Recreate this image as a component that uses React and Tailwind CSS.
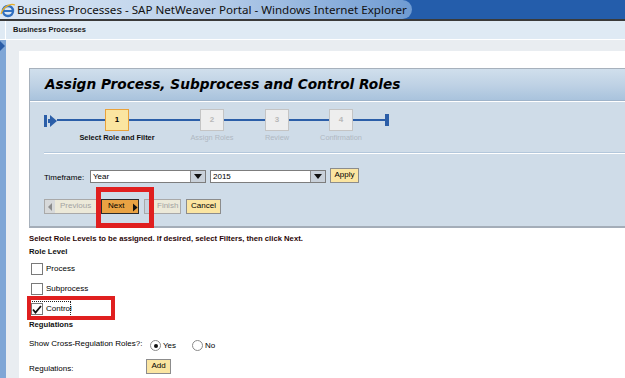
const sans = "font-['Liberation_Sans',Arial,sans-serif]";

function Step({ n, label, active }) {
  return (
    <div className="flex w-[24px] flex-col items-center">
      <div
        className={
          active
            ? "flex h-[22px] w-[24px] items-center justify-center border border-[#e9a23b] bg-[#fbe5a1] text-[8px] font-bold text-black"
            : "flex h-[22px] w-[24px] items-center justify-center border border-[#c4c4c4] bg-[#eeeeee] text-[8px] font-bold text-[#b8b8b8]"
        }
      >
        {n}
      </div>
      <div
        className={
          active
            ? "mt-[3px] whitespace-nowrap text-[7.4px] leading-[8px] font-bold text-[#111]"
            : "mt-[3px] whitespace-nowrap text-[7.4px] leading-[8px] text-[#b0b8c2]"
        }
      >
        {label}
      </div>
    </div>
  );
}

function Line({ w }) {
  return <div className="mt-[10px] h-[2px] bg-[#2b5ea8]" style={{ width: w }} />;
}

function Select({ value }) {
  return (
    <div className="flex h-[13px] w-[116px] border border-[#7d7d7d] bg-white">
      <div className="flex-1 pl-[2px] text-[8px] leading-[11px] text-black">{value}</div>
      <div className="flex w-[15px] items-center justify-center border-l border-[#8d8d8d] bg-[#c9d1da]">
        <svg width="8" height="5" viewBox="0 0 8 5">
          <path d="M0 0h8L4 5z" fill="#111" />
        </svg>
      </div>
    </div>
  );
}

function Checkbox({ checked }) {
  return (
    <div className="flex h-[12px] w-[12px] items-center justify-center border border-[#7a7a7a] bg-white">
      {checked && (
        <svg width="10" height="9" viewBox="0 0 10 9">
          <path d="M1 4.5l2.5 3L9 1" stroke="#111" strokeWidth="1.8" fill="none" />
        </svg>
      )}
    </div>
  );
}

function Radio({ checked }) {
  return (
    <div className="flex h-[11px] w-[11px] items-center justify-center rounded-full border border-[#8a8a8a] bg-white">
      {checked && <div className="h-[4px] w-[4px] rounded-full bg-[#111]" />}
    </div>
  );
}

export default function App() {
  return (
    <div className={`relative flex h-[378px] w-[625px] flex-col overflow-hidden bg-white ${sans}`}>
      {/* window title bar */}
      <div className="flex h-[19px] shrink-0 bg-[#245dab]">
        <div className="flex w-[412px] items-center rounded-r-[10px] bg-gradient-to-r from-[#dbe7f4] via-[#b9cfea] to-[#6f9bd2]">
          <svg width="16" height="16" viewBox="0 0 16 16" className="shrink-0">
            <circle cx="8" cy="9" r="5" stroke="#2f6fc0" strokeWidth="2.4" fill="none" />
            <path d="M3.5 9h9" stroke="#2f6fc0" strokeWidth="2" />
            <path d="M1 12C3 5 10 1 15 3" stroke="#e8b02a" strokeWidth="1.3" fill="none" />
          </svg>
          <span className="ml-[1px] whitespace-nowrap text-[11.6px] leading-[19px] text-[#111] font-['Noto_Sans',sans-serif]">
            Business Processes - SAP NetWeaver Portal - Windows Internet Explorer
          </span>
        </div>
      </div>
      <div className="h-[2px] shrink-0 bg-[#3a3a3a]" />

      {/* portal header */}
      <div className="flex h-[19px] shrink-0 items-center border-b border-white bg-[#dfeaf4]">
        <div className="ml-[5px] h-full w-[1px] bg-white" />
        <span className="ml-[7px] text-[7.5px] font-bold text-[#1a1a1a]">Business Processes</span>
      </div>

      <div className="flex flex-1">
        {/* left nav strip */}
        <div className="w-[6px] bg-[#7fa6d6]">
          <svg width="6" height="10" viewBox="0 0 6 10" className="mt-[1px]">
            <path d="M0 0l5 5-5 5z" fill="#2a5ca6" />
          </svg>
        </div>
        <div className="flex flex-1 flex-col bg-[#e9edf1]">
          <div className="h-[11px]" />
          <div className="flex flex-1">
            <div className="w-[13px]" />
            <div className="flex flex-1 flex-col overflow-hidden bg-white pl-[10px] pt-[17px]">
              {/* main panel */}
              <div className="w-[640px] border-t border-b-2 border-l border-[#a7b1bc] border-b-[#a4adb8]">
                <div className="flex h-[31px] items-center bg-gradient-to-b from-[#d0dfec] via-[#bfd2e5] to-[#a9c3dd] pl-[15px]">
                  <span className="text-[13.7px] font-bold italic text-black font-['DejaVu_Sans',Verdana,sans-serif]">
                    Assign Process, Subprocess and Control Roles
                  </span>
                </div>
                <div className="h-[1px] bg-[#9fb4ca]" />
                <div className="h-[1px] bg-white" />
                <div className="bg-[#cfdce8] pl-[14px] pt-[7px] pb-[12px]">
                  {/* roadmap */}
                  <div className="flex h-[36px] items-start">
                    <svg width="13" height="12" viewBox="0 0 13 12" className="mt-[6px]">
                      <rect x="0" y="0" width="3" height="12" fill="#2b5ea8" />
                      <rect x="4" y="4" width="3" height="4" fill="#2b5ea8" />
                      <path d="M6 0l7 6-7 6z" fill="#2b5ea8" />
                    </svg>
                    <Line w={48} />
                    <Step n="1" label="Select Role and Filter" active />
                    <Line w={71} />
                    <Step n="2" label="Assign Roles" />
                    <Line w={41} />
                    <Step n="3" label="Review" />
                    <Line w={40} />
                    <Step n="4" label="Confirmation" />
                    <Line w={32} />
                    <div className="mt-[5px] h-[12px] w-[4px] bg-[#2b5ea8]" />
                  </div>
                  <div className="mt-[7px] h-[1px] bg-[#b3c7db]" />
                  <div className="h-[1px] bg-white" />

                  {/* timeframe */}
                  <div className="mt-[14px] flex items-end">
                    <span className="w-[46px] text-[8px] leading-[10px] text-black">Timeframe:</span>
                    <Select value="Year" />
                    <div className="w-[4px]" />
                    <Select value="2015" />
                    <div className="w-[4px]" />
                    <div className="flex h-[15px] w-[29px] justify-center border border-[#8c8c8c] bg-[#fbe5a1] text-[8px] leading-[11px] text-black">
                      Apply
                    </div>
                  </div>

                  {/* navigation buttons */}
                  <div className="mt-[16px] flex h-[15px] items-stretch">
                    <div className="flex w-[53px] border border-[#a9a9a9] bg-[#ece9d9]">
                      <div className="flex w-[10px] items-center justify-center bg-[#d7d9da]">
                        <svg width="4" height="8" viewBox="0 0 4 8">
                          <path d="M4 0v8L0 4z" fill="#8c8c8c" />
                        </svg>
                      </div>
                      <span className="pl-[5px] text-[8px] leading-[12px] text-[#a3a3a3]">Previous</span>
                    </div>
                    <div className="ml-[4px] flex w-[38px] border border-[#2b2b2b] bg-[#e9a243]">
                      <span className="pl-[6px] text-[8px] leading-[12px] text-black">Next</span>
                      <svg width="5" height="9" viewBox="0 0 5 9" className="ml-[9px] mt-[3px]">
                        <path d="M0 0l5 4.5L0 9z" fill="#111" />
                      </svg>
                    </div>
                    <div className="ml-[5px] flex w-[37px] border border-[#a9a9a9] bg-[#ece9d9]">
                      <div className="w-[5px] bg-[#c7d3df]" />
                      <span className="pl-[7px] text-[8px] leading-[12px] text-[#a3a3a3]">Finish</span>
                    </div>
                    <div className="ml-[5px] flex w-[35px] justify-center border border-[#8c8c8c] bg-[#fbe5a1] text-[8px] leading-[12px] text-black">
                      Cancel
                    </div>
                  </div>
                </div>
              </div>

              {/* form below panel */}
              <div className="mt-[6px] whitespace-nowrap text-[7.7px] leading-[10px] font-bold text-[#2a0606]">
                Select Role Levels to be assigned. If desired, select Filters, then click Next.
              </div>
              <div className="mt-[3px] text-[7.7px] leading-[10px] font-bold text-[#111]">Role Level</div>

              <div className="mt-[6px] flex h-[12px] items-center pl-[2px]">
                <Checkbox />
                <span className="ml-[3px] text-[8px] text-black">Process</span>
              </div>
              <div className="mt-[8px] flex h-[12px] items-center pl-[2px]">
                <Checkbox />
                <span className="ml-[3px] text-[8px] text-black">Subprocess</span>
              </div>
              <div className="mt-[6px] flex h-[16px] w-[42px] items-center border border-dotted border-[#222] pl-[1px]">
                <Checkbox checked />
                <span className="ml-[3px] text-[8px] text-black">Control</span>
              </div>

              <div className="mt-[3px] text-[7.7px] leading-[10px] font-bold text-[#111]">Regulations</div>

              <div className="mt-[10px] flex items-start">
                <span className="w-[121px] text-[8px] leading-[8px] text-black">Show Cross-Regulation Roles?:</span>
                <Radio checked />
                <span className="ml-[2px] mt-[1px] text-[8px] leading-[10px] text-black">Yes</span>
                <div className="ml-[16px]">
                  <Radio />
                </div>
                <span className="ml-[2px] mt-[1px] text-[8px] leading-[10px] text-black">No</span>
              </div>

              <div className="mt-[8px] flex items-end">
                <span className="w-[117px] text-[8px] leading-[10px] text-black">Regulations:</span>
                <div className="flex h-[15px] w-[25px] justify-center border border-[#8c8c8c] bg-[#fbe5a1] text-[8px] leading-[11px] text-black">
                  Add
                </div>
              </div>
            </div>
          </div>
        </div>
      </div>

      {/* red annotation boxes */}
      <div className="absolute left-[96px] top-[187px] h-[41px] w-[58px] border-[5px] border-[#e01f1f]" />
      <div className="absolute left-[27px] top-[296px] h-[24px] w-[88px] border-[4px] border-[#e01f1f]" />
    </div>
  );
}
